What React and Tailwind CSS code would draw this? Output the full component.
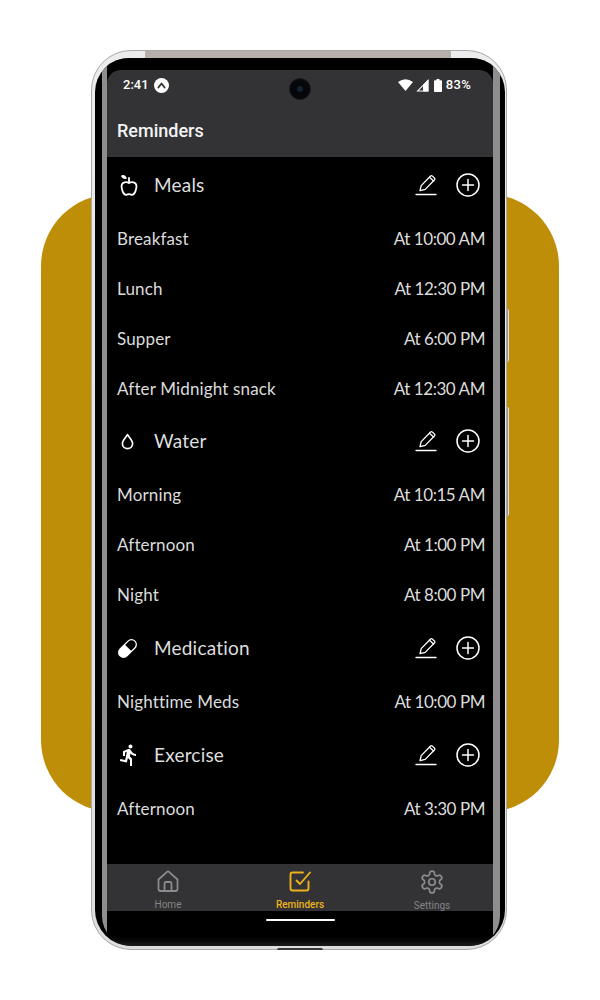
import React from "react";
import { MdDirectionsRun } from "react-icons/md";

const body = "font-['Lato','Noto_Sans',sans-serif]";

function Pencil() {
  return (
    <svg width="24" height="24" viewBox="0 0 24 24" fill="none" stroke="white" strokeWidth="1.3" strokeLinejoin="round" strokeLinecap="round">
      <path d="M6 17.6 L7.2 12.6 L16.6 3 Q17.4 2.3 18.2 2.9 L20.6 5.2 Q21.3 6 20.6 6.8 L11.2 16.4 Z" />
      <path d="M15.4 4.2 L19.6 8" />
      <path d="M2 21.5 H22" strokeWidth="1.4" />
    </svg>
  );
}
function PlusCircle() {
  return (
    <svg width="24" height="24" viewBox="0 0 24 24" fill="none" stroke="white" strokeWidth="1.5" strokeLinecap="round">
      <circle cx="12" cy="12" r="11" />
      <path d="M12 6.5V17.5M6.5 12H17.5" />
    </svg>
  );
}
function Apple() {
  return (
    <svg width="18" height="21" viewBox="0 0 18 21" fill="none" stroke="white" strokeWidth="1.8" strokeLinejoin="round" strokeLinecap="round">
      <path d="M9 8 C6.6 6.6 2.2 6.8 1.6 10.4 C1.2 14 3.2 19.6 6 19.8 C7.4 19.9 8 19.1 9 19.1 C10 19.1 10.6 19.9 12 19.8 C14.8 19.6 16.8 14 16.4 10.4 C15.8 6.8 11.4 6.6 9 8 Z" />
      <path d="M9 7.5 V3" />
      <path d="M2 1.2 C3.6 .7 5.2 1.4 5.8 3 C4.2 3.4 2.8 2.8 2 1.2 Z" fill="white" />
    </svg>
  );
}
function Drop() {
  return (
    <svg width="13" height="17" viewBox="0 0 14 18" fill="none" stroke="white" strokeWidth="1.8" strokeLinejoin="round">
      <path d="M7 1.5 C8.5 4.4 12.5 7.6 12.5 11.2 C12.5 14.4 10 16.6 7 16.6 C4 16.6 1.5 14.4 1.5 11.2 C1.5 7.6 5.5 4.4 7 1.5 Z" />
    </svg>
  );
}
function Pill() {
  return (
    <svg width="21" height="21" viewBox="0 0 21 21">
      <g transform="rotate(-45 10.5 10.5)">
        <rect x="-0.6" y="5" width="22.2" height="11" rx="5.5" fill="white" />
        <path d="M11.4 6.3 H16.1 A4.2 4.2 0 0 1 16.1 14.7 H11.4 Z" fill="black" />
      </g>
    </svg>
  );
}
function Check() {
  return (
    <svg width="24" height="24" viewBox="0 0 24 24" fill="none" stroke="#edb21b" strokeWidth="1.9" strokeLinecap="round" strokeLinejoin="round">
      <path d="M20.5 12.5 V19.5 Q20.5 21.5 18.5 21.5 H4.5 Q2.5 21.5 2.5 19.5 V5.5 Q2.5 3.5 4.5 3.5 H15" />
      <path d="M8.5 11.5 L12 15 L22 3.5" />
    </svg>
  );
}
function Home() {
  return (
    <svg width="24" height="24" viewBox="0 0 24 24" fill="none" stroke="#8b8b8d" strokeWidth="1.8" strokeLinejoin="round" strokeLinecap="round">
      <path d="M2.5 10.5 L11 2.8 Q12 2 13 2.8 L21.5 10.5 V20 Q21.5 22 19.5 22 H4.5 Q2.5 22 2.5 20 Z" />
      <path d="M8.5 22 V14.5 Q8.5 13 10 13 H14 Q15.5 13 15.5 14.5 V22" />
    </svg>
  );
}
function Gear() {
  return (
    <svg width="26" height="26" viewBox="0 0 24 24" fill="none" stroke="#8b8b8d" strokeWidth="1.6" strokeLinecap="round" strokeLinejoin="round">
      <path d="M12.22 2h-.44a2 2 0 0 0-2 2v.18a2 2 0 0 1-1 1.73l-.43.25a2 2 0 0 1-2 0l-.15-.08a2 2 0 0 0-2.73.73l-.22.38a2 2 0 0 0 .73 2.73l.15.1a2 2 0 0 1 1 1.72v.51a2 2 0 0 1-1 1.74l-.15.09a2 2 0 0 0-.73 2.73l.22.38a2 2 0 0 0 2.73.73l.15-.08a2 2 0 0 1 2 0l.43.25a2 2 0 0 1 1 1.73V20a2 2 0 0 0 2 2h.44a2 2 0 0 0 2-2v-.18a2 2 0 0 1 1-1.73l.43-.25a2 2 0 0 1 2 0l.15.08a2 2 0 0 0 2.73-.73l.22-.39a2 2 0 0 0-.73-2.73l-.15-.08a2 2 0 0 1-1-1.74v-.5a2 2 0 0 1 1-1.74l.15-.09a2 2 0 0 0 .73-2.73l-.22-.38a2 2 0 0 0-2.73-.73l-.15.08a2 2 0 0 1-2 0l-.43-.25a2 2 0 0 1-1-1.73V4a2 2 0 0 0-2-2z" />
      <circle cx="12" cy="12" r="3" />
    </svg>
  );
}

function Section({ icon, title, rows, tight }) {
  return (
    <section className={tight ? "mt-px" : ""}>
      <div className="h-[54px] flex items-center">
        <div className="w-[37px] flex justify-start">{icon}</div>
        <span className={`${body} text-[19px] text-[#dedede] tracking-[0.2px]`}>{title}</span>
        <div className="ml-auto flex items-center gap-[18px] pr-[5px]">
          <Pencil />
          <PlusCircle />
        </div>
      </div>
      <div className="mt-[2px]">
        {rows.map(([l, t]) => (
          <div key={l} className={`${body} h-[50px] flex items-center justify-between text-[17px] text-[#dcdcdc] tracking-[0.15px]`}>
            <span>{l}</span>
            <span className="tracking-[-0.45px]">{t}</span>
          </div>
        ))}
      </div>
    </section>
  );
}

function NavItem({ icon, label, active }) {
  return (
    <div className="w-[132px] shrink-0 h-full flex flex-col items-center pt-[5px]">
      <div className="h-[25px] flex items-center justify-center">{icon}</div>
      <span className={`mt-[6px] text-[10px] leading-[12px] font-['Roboto',sans-serif] ${active ? "text-[#edb21b] font-medium" : "text-[#848486]"}`}>{label}</span>
    </div>
  );
}

export default function App() {
  return (
    <div className="relative w-[600px] h-[1000px] bg-white overflow-hidden pt-[50px]">
      <div className="absolute left-[41px] top-[194px] w-[518px] h-[618px] rounded-[72px] bg-[#bf8e08]" />

      <div className="absolute left-[505px] top-[309px] w-[4px] h-[53px] rounded-r-[2px] bg-[#8f8f91] border-r border-[#e2e2e2]" />
      <div className="absolute left-[505px] top-[407px] w-[4px] h-[109px] rounded-r-[2px] bg-[#8f8f91] border-r border-[#e2e2e2]" />

      <div className="relative ml-[91px] w-[416px] h-[900px] rounded-[40px] bg-gradient-to-b from-[#ececec] to-[#dedede] border border-[#a9a9a9] pl-[3px] pr-px pt-[7px] pb-[3px]">
        <div className="absolute left-[53px] right-[55px] top-0 h-[8px] bg-[#b5b1aa]" />
        <div className="absolute left-[98px] right-[100px] top-[7px] h-[2px] bg-[#5c544c]" />
        <div className="relative h-full rounded-t-[34px] rounded-b-[36px] bg-black pl-[7px] pr-[5px] overflow-hidden">
          <div className="h-full rounded-b-[30px] bg-[#8e8e8e] pl-[5px] pr-[7px] overflow-hidden flex flex-col">
            <div className="flex-1 bg-black pt-[12px] flex flex-col overflow-hidden">
              <header className="h-[87px] bg-[#333234] shrink-0 rounded-t-[14px]">
                <div className="h-[30px] flex items-center pl-[16px] pr-[22px] font-['Roboto',sans-serif] text-white text-[13px] font-medium">
                  <span>2:41</span>
                  <span className="ml-[5px] w-[15px] h-[15px] rounded-full bg-white flex items-center justify-center">
                    <svg width="9" height="9" viewBox="0 0 8 8" fill="none" stroke="#333234" strokeWidth="1.6" strokeLinecap="round" strokeLinejoin="round"><path d="M1.2 5.8 L4 2.2 L6.8 5.8" /></svg>
                  </span>
                  <span className="ml-auto flex items-center gap-[3px]">
                    <svg width="15" height="12" viewBox="0 0 15 12" fill="white"><path d="M0 3 Q7.5 -2.5 15 3 L7.5 12 Z" /></svg>
                    <svg width="13" height="13" viewBox="0 0 12 12" fill="none" stroke="white" strokeWidth="1"><path d="M11 1.5 V11 H1.5 Z" /><path d="M7 11 V5.5 L11 1.5 V11 Z" fill="white" /></svg>
                    <svg className="ml-[2px]" width="8" height="13" viewBox="0 0 8 13" fill="white"><path d="M2.5 0 H5.5 V1.2 H7.2 Q8 1.2 8 2 V12.2 Q8 13 7.2 13 H.8 Q0 13 0 12.2 V2 Q0 1.2 .8 1.2 H2.5 Z" /></svg>
                    <span className="ml-[1px] tracking-[0.3px]">83%</span>
                  </span>
                </div>
                <h1 className="mt-[19px] pl-[10px] font-['Roboto',sans-serif] text-[18px] leading-[24px] font-medium text-[#f4f4f4]">Reminders</h1>
              </header>

              <main className="flex-1 pl-[10px] pr-[8px] pt-px">
                <Section icon={<div className="pl-[3px]"><Apple /></div>} title="Meals" rows={[["Breakfast", "At 10:00 AM"], ["Lunch", "At 12:30 PM"], ["Supper", "At 6:00 PM"], ["After Midnight snack", "At 12:30 AM"]]} />
                <Section icon={<div className="pl-[4px]"><Drop /></div>} title="Water" rows={[["Morning", "At 10:15 AM"], ["Afternoon", "At 1:00 PM"], ["Night", "At 8:00 PM"]]} />
                <Section tight icon={<Pill />} title="Medication" rows={[["Nighttime Meds", "At 10:00 PM"]]} />
                <Section tight icon={<MdDirectionsRun size={24} color="white" />} title="Exercise" rows={[["Afternoon", "At 3:30 PM"]]} />
              </main>

              <nav className="h-[47px] shrink-0 bg-[#333234] flex justify-center">
                <NavItem icon={<Home />} label="Home" />
                <NavItem active icon={<Check />} label="Reminders" />
                <NavItem icon={<Gear />} label="Settings" />
              </nav>
              <div className="h-[35px] shrink-0 flex justify-center pt-[8px] bg-gradient-to-b from-black from-60% to-[#1c1c1c]">
                <div className="w-[69px] h-[2px] rounded-full bg-white" />
              </div>
            </div>
          </div>
        </div>
        <div className="absolute left-[185px] bottom-[-1px] w-[46px] h-[2px] rounded-t-[2px] bg-[#3a3a3a]" />
      </div>

      <div className="absolute left-[289px] top-[78px] w-[22px] h-[22px] rounded-full bg-[#05070a] border border-[#161a20] flex items-center justify-center">
        <div className="w-[6px] h-[6px] rounded-full bg-[#12222e]" />
      </div>
    </div>
  );
}
